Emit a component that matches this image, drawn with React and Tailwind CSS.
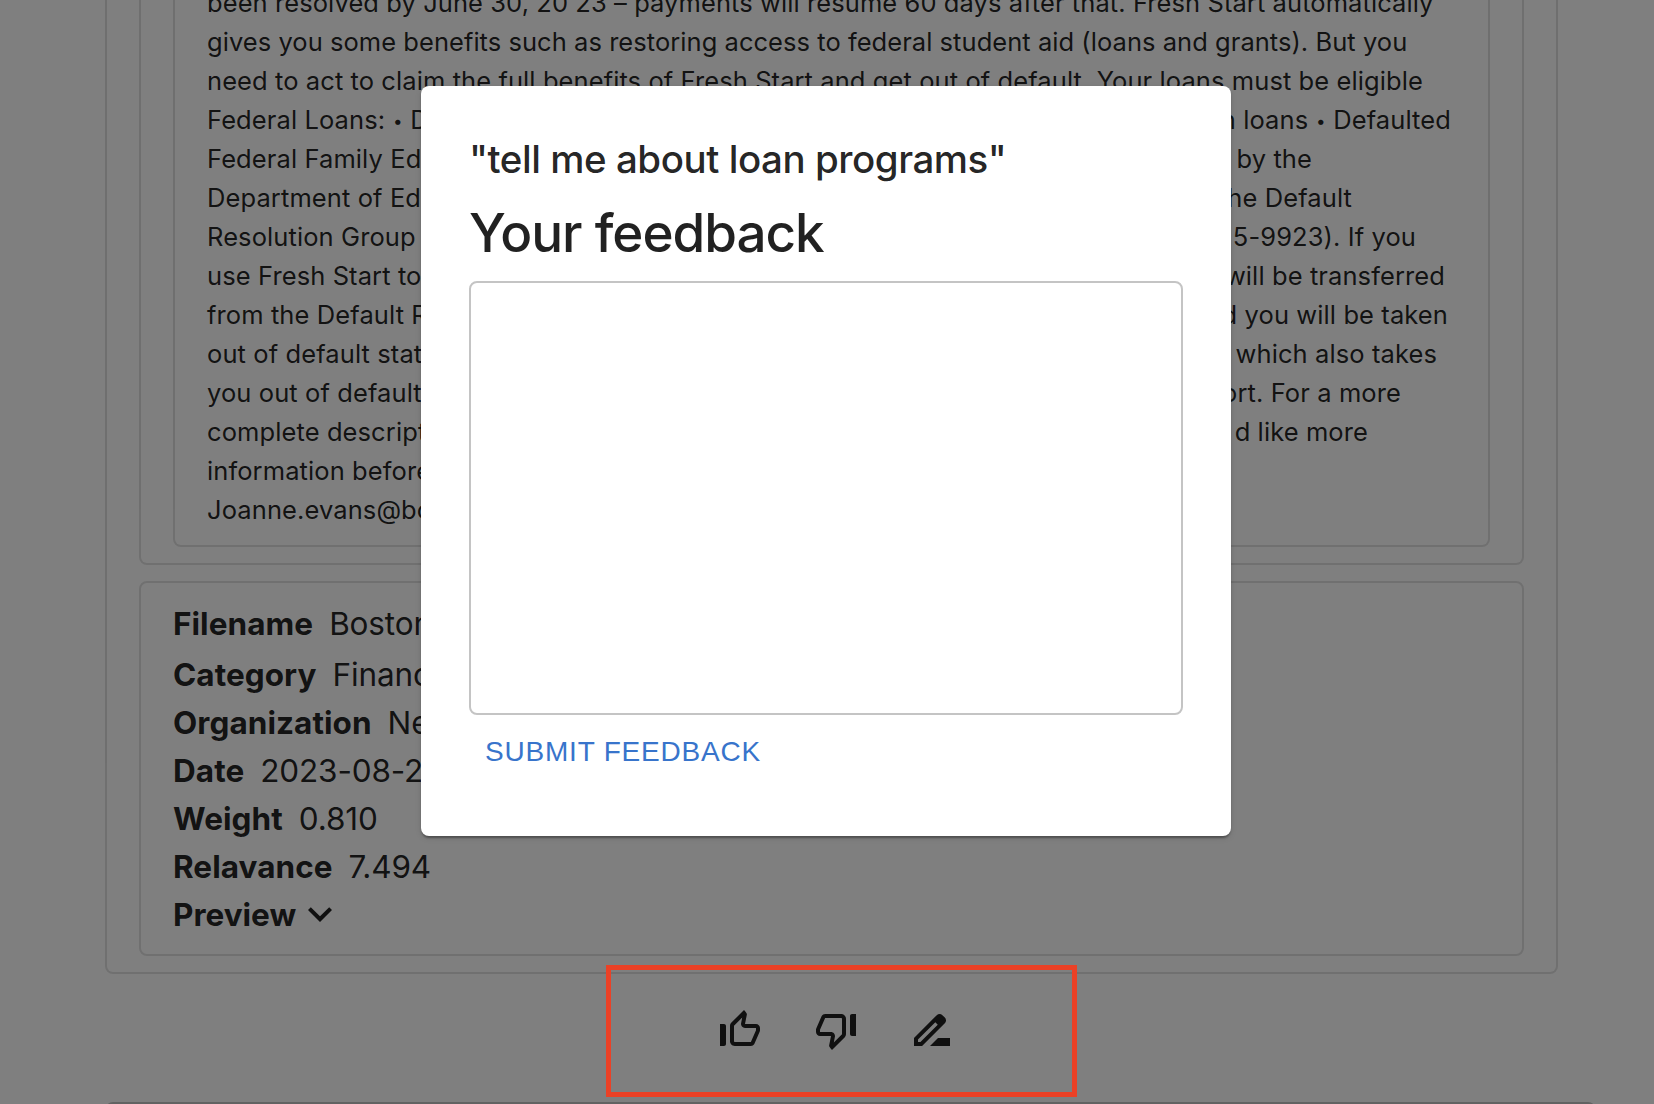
import { MdExpandMore, MdDriveFileRenameOutline } from "react-icons/md";

const openingLines = [
  {
    text: "been resolved by June 30, 20 23 – payments will resume 60 days after that. Fresh Start automatically",
    tracking: "tracking-[0.08px]",
  },
  {
    text: "gives you some benefits such as restoring access to federal student aid (loans and grants). But you",
    tracking: "tracking-[0.045px]",
  },
  {
    text: "need to act to claim the full benefits of Fresh Start and get out of default. Your loans must be eligible",
    tracking: "tracking-[0.085px]",
  },
];

const Bullet = () => (
  <span className="relative -top-0.5 inline-block w-[10.5px] text-center text-[17px] leading-none">•</span>
);

const splitLines = [
  { start: <>Federal Loans: <Bullet /> D</>, end: <>n loans <Bullet /> Defaulted</>, width: "w-[1244px]" },
  { start: "Federal Family Ed", end: "by the", width: "w-[1105px]" },
  { start: "Department of Ed", end: "he Default", width: "w-[1145px]" },
  { start: "Resolution Group", end: "5-9923). If you", width: "w-[1209px]" },
  { start: "use Fresh Start to", end: "will be transferred", width: "w-[1238px]" },
  { start: "from the Default R", end: "d you will be taken", width: "w-[1241px]" },
  { start: "out of default stat", end: "which also takes", width: "w-[1230px]" },
  { start: "you out of default", end: "ort. For a more", width: "w-[1194px]" },
  { start: "complete descript", end: "d like more", width: "w-[1161px]" },
  { start: "information before", end: "", width: "w-full" },
  { start: "Joanne.evans@bo", end: "", width: "w-full" },
];

const details = [
  ["Filename", "Boston"],
  ["Category", "Financ"],
  ["Organization", "Ne"],
  ["Date", "2023-08-2"],
  ["Weight", "0.810"],
  ["Relavance", "7.494"],
];

const ThumbIcon = ({ className }) => (
  <svg viewBox="0 0 24 24" fill="currentColor" className={className}>
    <path d="M13.11 5.72l-.57 2.89c-.12.59.04 1.2.42 1.66.38.46.94.73 1.54.73H20v1.08L17.43 18H9.34c-.18 0-.34-.16-.34-.34V9.82l4.11-4.1M14 2L7.59 8.41C7.21 8.79 7 9.3 7 9.83v7.83C7 18.95 8.05 20 9.34 20h8.1c.71 0 1.36-.37 1.72-.97l2.67-6.15c.11-.25.17-.52.17-.8V11c0-1.1-.9-2-2-2h-5.5l.92-4.65c.05-.22.02-.46-.08-.66-.23-.45-.52-.86-.88-1.22L14 2zM4 9H2v11h2c.55 0 1-.45 1-1v-9c0-.55-.45-1-1-1z" />
  </svg>
);

export default function App() {
  return (
    <div className="relative h-[1104px] w-[1654px] overflow-hidden bg-white font-['Inter',sans-serif] text-black/87">
      <div className="ml-[105px] h-[974px] w-[1453px] rounded-b-lg border-x-2 border-b-2 border-black/12 px-8">
        <div className="h-[565px] rounded-b-lg border-x-2 border-b-2 border-black/12 px-8">
          <div className="flex h-[547px] flex-col justify-end rounded-b-lg border-x-2 border-b-2 border-black/12 px-8 pb-4 text-[25.5px] leading-[39px]">
            {openingLines.map(({ text, tracking }) => (
              <p key={text} className={`whitespace-nowrap ${tracking}`}>
                {text}
              </p>
            ))}
            {splitLines.map(({ start, end, width }, i) => (
              <p key={i} className={`flex justify-between whitespace-nowrap tracking-[0.1px] ${width}`}>
                <span>{start}</span>
                <span>{end}</span>
              </p>
            ))}
          </div>
        </div>
        <div className="mt-4 h-[375px] rounded-lg border-2 border-black/12 px-8 pt-[17px] text-[31.5px] leading-[48px]">
          {details.map(([label, value]) => (
            <div key={label} className="flex gap-4 whitespace-nowrap first:mb-[3px]">
              <span className="font-bold tracking-[0.05px]">{label}</span>
              <span className="tracking-[-0.15px]">{value}</span>
            </div>
          ))}
          <div className="flex items-start">
            <span className="font-bold">Preview</span>
            <MdExpandMore className="-mt-px size-12" />
          </div>
        </div>
      </div>
      <div className="mt-8 ml-[716px] flex gap-12">
        <ThumbIcon className="size-12" />
        <ThumbIcon className="size-12 rotate-180" />
        <MdDriveFileRenameOutline className="size-12" />
      </div>
      <div className="mt-12 ml-[105px] h-4 w-[1491px] rounded-t-lg border-2 border-[#c4c4c4]" />

      <div className="absolute inset-0 bg-black/50" />
      <div className="absolute top-[965px] left-[606px] h-[132px] w-[471px] border-5 border-[#eb4126]" />

      <div className="absolute top-[86px] left-[421px] h-[750px] w-[810px] rounded-lg bg-white px-12 pt-[49px] shadow-[0_4px_2px_-2px_rgba(0,0,0,0.2),0_2px_2px_rgba(0,0,0,0.14),0_2px_6px_rgba(0,0,0,0.12)]">
        <h2 className="text-[38.5px] leading-[48px] font-medium tracking-[-0.46px] whitespace-nowrap">
          "tell me about loan programs"
        </h2>
        <h1 className="mt-[18px] text-[53px] leading-[64px] font-medium tracking-[-1.03px]">Your feedback</h1>
        <textarea className="mt-4 block h-[434px] w-full resize-none rounded-lg border-2 border-[#c4c4c4] outline-none" />
        <button className="mt-4 ml-4 block font-['Liberation_Sans',sans-serif] text-[28px] leading-[42px] tracking-[0.8px] text-[#3874cb]">
          SUBMIT FEEDBACK
        </button>
      </div>
    </div>
  );
}
